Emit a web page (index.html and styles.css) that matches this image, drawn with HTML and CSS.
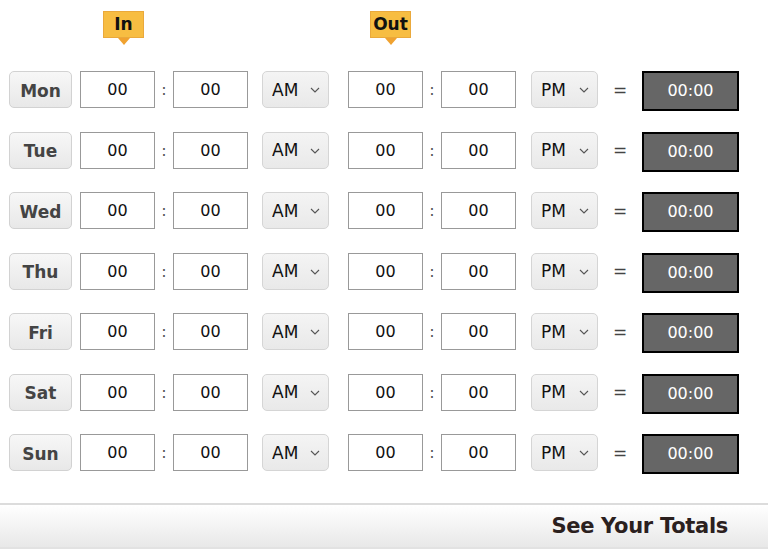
FILE: index.html
```html
<!DOCTYPE html>
<html lang="en">
<head>
    <meta charset="UTF-8">
    <meta name="viewport" content="width=device-width, initial-scale=1.0">
    <title>Time Card Calculator</title>
    <link rel="stylesheet" href="styles.css">
</head>
<body>
    <div class="calc">
        <div class="labels">
            <div class="tag tag-in">In</div>
            <div class="tag tag-out">Out</div>
        </div>

        <div class="rows" id="rows">
            <!-- rows are generated here -->
        </div>

        <div class="totals-bar">
            <span class="totals-text">See Your Totals</span>
        </div>
    </div>

    <script>
        const days = ['Mon', 'Tue', 'Wed', 'Thu', 'Fri', 'Sat', 'Sun'];
        const chevron = '<svg class="chev" viewBox="0 0 10 6"><path d="M1 1l4 4 4-4" fill="none" stroke="#555" stroke-width="1.1"/></svg>';

        function selectBox(value) {
            return `
                <div class="select-wrap">
                    <select class="ampm">
                        <option${value === 'AM' ? ' selected' : ''}>AM</option>
                        <option${value === 'PM' ? ' selected' : ''}>PM</option>
                    </select>
                    ${chevron}
                </div>`;
        }

        const rows = document.getElementById('rows');
        days.forEach(day => {
            const row = document.createElement('div');
            row.className = 'row';
            row.innerHTML = `
                <button class="day">${day}</button>
                <input class="time" value="00">
                <span class="colon">:</span>
                <input class="time" value="00">
                ${selectBox('AM')}
                <input class="time time-out" value="00">
                <span class="colon">:</span>
                <input class="time" value="00">
                ${selectBox('PM')}
                <span class="equals">=</span>
                <div class="total">00:00</div>
            `;
            rows.appendChild(row);
        });
    </script>
</body>
</html>
```

FILE: styles.css
```css
* {
    margin: 0;
    padding: 0;
    box-sizing: border-box;
}

body {
    font-family: 'DejaVu Sans', Verdana, sans-serif;
    background: #fff;
    width: 768px;
    height: 551px;
    overflow: hidden;
}

.labels {
    position: relative;
    height: 71px;
}

.tag {
    position: absolute;
    top: 11px;
    height: 27px;
    background: #f7bd42;
    border: 1px solid #eaa93c;
    font-weight: bold;
    font-size: 17px;
    line-height: 25px;
    text-align: center;
    color: #111;
}

.tag::after {
    content: '';
    position: absolute;
    left: 50%;
    top: 26px;
    margin-left: -6px;
    border-left: 6px solid transparent;
    border-right: 6px solid transparent;
    border-top: 7px solid #f0a230;
}

.tag-in {
    left: 103px;
    width: 41px;
}

.tag-out {
    left: 370px;
    width: 41px;
}

.rows {
    display: flex;
    flex-direction: column;
    gap: 23.5px;
    padding-left: 9px;
}

.row {
    display: flex;
    align-items: center;
    height: 37px;
}

.day {
    width: 63px;
    height: 37px;
    margin-right: 8px;
    border: 1px solid #d2d2d2;
    border-radius: 5px;
    background: linear-gradient(#f7f7f7, #e8e8e8);
    font-family: 'DejaVu Sans', Verdana, sans-serif;
    font-weight: bold;
    font-size: 17px;
    color: #444;
    padding-top: 2px;
}

.time {
    width: 75px;
    height: 37px;
    border: 1px solid #999;
    font-family: 'DejaVu Sans', Verdana, sans-serif;
    font-size: 16px;
    text-align: center;
    color: #111;
    background: #fff;
}

.colon {
    width: 18px;
    text-align: center;
    font-size: 16px;
    color: #555;
}

.select-wrap {
    position: relative;
    width: 67px;
    height: 37px;
    margin-left: 14px;
    margin-right: 19px;
}

.row .select-wrap:nth-of-type(2) {
    margin-left: 15px;
    margin-right: 0;
}

.ampm {
    appearance: none;
    -webkit-appearance: none;
    width: 100%;
    height: 100%;
    border: 1px solid #d5d5d5;
    border-radius: 5px;
    background: linear-gradient(#f4f4f4, #e9e9e9);
    font-family: 'DejaVu Sans', Verdana, sans-serif;
    font-size: 17px;
    color: #111;
    padding-left: 9px;
}

.chev {
    position: absolute;
    right: 9px;
    top: 16px;
    width: 10px;
    height: 6px;
    pointer-events: none;
}

.equals {
    width: 44px;
    text-align: center;
    font-size: 17px;
    color: #444;
}

.total {
    align-self: flex-start;
    width: 97px;
    height: 40px;
    border: 2px solid #000;
    background: #666;
    color: #fff;
    font-size: 16px;
    line-height: 36px;
    text-align: center;
}

.totals-bar {
    margin-top: 32px;
    height: 46px;
    border-top: 2px solid #dcdcdc;
    border-bottom: 2px solid #e2e2e2;
    background: linear-gradient(#fff, #e8e8e8);
    display: flex;
    justify-content: flex-end;
    align-items: center;
    padding-right: 40px;
}

.totals-text {
    font-family: 'DejaVu Sans', Verdana, sans-serif;
    font-weight: bold;
    font-size: 21px;
    color: #2b201e;
    letter-spacing: -0.3px;
}
```
